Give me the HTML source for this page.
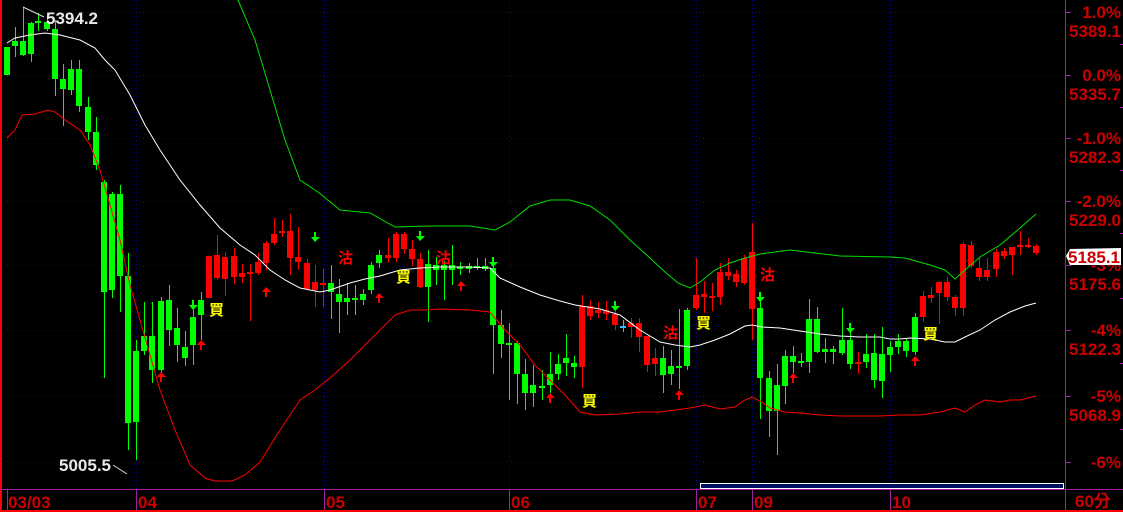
<!DOCTYPE html>
<html><head><meta charset="utf-8"><style>
html,body{margin:0;padding:0;background:#000;width:1123px;height:512px;overflow:hidden}
svg{display:block}
.ax{font:bold 17px "Liberation Sans",sans-serif;fill:#cc0000;text-anchor:end}
.dt{font:bold 17px "Liberation Sans",sans-serif;fill:#cc0000}
.mk{font:bold 15px "Noto Sans CJK TC","WenQuanYi Zen Hei",sans-serif}
.lb{font:bold 17px "Liberation Sans",sans-serif;fill:#e8e8e8}
</style></head><body>
<svg id="s" width="1123" height="512" xmlns="http://www.w3.org/2000/svg">
<g stroke="#0000d0" stroke-width="1" stroke-dasharray="1,3">
<line x1="7" y1="12.5" x2="1065" y2="12.5"/><line x1="7" y1="75.5" x2="1065" y2="75.5"/>
<line x1="7" y1="138.5" x2="1065" y2="138.5"/><line x1="7" y1="201.5" x2="1065" y2="201.5"/>
<line x1="7" y1="265.5" x2="1065" y2="265.5"/><line x1="7" y1="330.5" x2="1065" y2="330.5"/>
<line x1="7" y1="396.5" x2="1065" y2="396.5"/><line x1="7" y1="462.5" x2="1065" y2="462.5"/>
<line x1="7.5" y1="0" x2="7.5" y2="490"/><line x1="136.5" y1="0" x2="136.5" y2="490"/>
<line x1="324.5" y1="0" x2="324.5" y2="490"/><line x1="509.5" y1="0" x2="509.5" y2="490"/>
<line x1="696.5" y1="0" x2="696.5" y2="490"/><line x1="752.5" y1="0" x2="752.5" y2="490"/>
<line x1="890.5" y1="0" x2="890.5" y2="490"/>
</g>
<g id="c"></g>
<polyline fill="none" stroke="#fff" stroke-width="1" points="7,43 15,38 30,35 45,33 60,35 80,40 95,48 105,60 115,70 130,95 145,125 160,150 180,180 200,205 220,228 240,245 255,255 270,270 285,280 300,288 320,292 330,290 350,283 365,279 380,276 400,270 420,268 440,267 470,267 490,268 500,278 520,287 540,295 560,301 575,305 600,309 620,315 640,330 660,342 675,345 690,347 700,345 715,340 730,334 745,326 752,325 762,327 780,328 800,331 820,334 840,336 860,337 880,337 890,339 900,339 910,338 930,339 945,342 955,342 965,337 980,330 995,320 1010,312 1025,306 1036,303"/>
<polyline fill="none" stroke="#00e000" stroke-width="1" points="238,0 255,40 270,90 285,140 300,180 318,192 340,210 370,213 395,227 430,226 470,226 495,230 510,222 530,206 550,200 570,200 590,206 610,220 630,240 650,258 665,272 678,283 690,288 700,282 715,270 730,263 745,258 760,254 790,250 840,256 890,257 905,258 930,265 945,270 955,279 965,270 980,257 1000,245 1020,228 1036,214"/>
<polyline fill="none" stroke="#ff0000" stroke-width="1" points="7,138 15,130 22,115 35,114 48,110 55,112 65,120 80,130 90,145 100,170 110,205 120,240 130,285 140,320 150,355 160,390 175,430 190,465 205,478 215,481 232,481 245,475 260,462 280,430 300,400 315,390 330,378 350,360 365,345 380,330 395,315 410,310 425,310 440,309 470,310 490,312 505,330 520,345 535,365 550,380 565,395 580,412 595,415 620,414 640,412 660,412 690,408 705,405 720,409 735,407 745,400 752,397 762,402 770,408 785,412 800,413 820,415 840,416 880,416 900,415 920,415 940,412 955,408 965,412 975,405 985,400 1000,402 1010,400 1020,400 1036,396"/>
<g id="m"></g>
<g class="mk" fill="#ffff00">
<text x="209" y="315">買</text><text x="396" y="282">買</text><text x="582" y="406">買</text><text x="696" y="328">買</text><text x="923" y="339">買</text>
</g>
<g class="mk" fill="#ff0000">
<text x="338" y="263">沽</text><text x="436" y="263">沽</text><text x="663" y="338">沽</text><text x="760" y="280">沽</text>
</g>
<line x1="23" y1="7" x2="44" y2="17" stroke="#ddd"/>
<text class="lb" x="46" y="24">5394.2</text>
<line x1="113" y1="465" x2="127" y2="474" stroke="#ddd"/>
<text class="lb" x="59" y="471">5005.5</text>
<rect x="0" y="0" width="2" height="512" fill="#ff0000"/>
<rect x="1065" y="0" width="1" height="512" fill="#a020a0"/>
<rect x="0" y="489" width="1123" height="1" fill="#a020a0"/>
<rect x="0" y="510" width="1123" height="2" fill="#ff0000"/>
<g fill="#a020a0">
<rect x="7" y="490" width="1" height="20"/><rect x="136" y="490" width="1" height="20"/><rect x="324" y="490" width="1" height="20"/><rect x="509" y="490" width="1" height="20"/><rect x="696" y="490" width="1" height="20"/><rect x="752" y="490" width="1" height="20"/><rect x="890" y="490" width="1" height="20"/>
<rect x="1065" y="12" width="6" height="1"/><rect x="1065" y="75" width="6" height="1"/><rect x="1065" y="138" width="6" height="1"/><rect x="1065" y="201" width="6" height="1"/><rect x="1065" y="265" width="6" height="1"/><rect x="1065" y="330" width="6" height="1"/><rect x="1065" y="396" width="6" height="1"/><rect x="1065" y="462" width="6" height="1"/>
<rect x="1120" y="44" width="3" height="1"/><rect x="1120" y="107" width="3" height="1"/><rect x="1120" y="170" width="3" height="1"/><rect x="1120" y="233" width="3" height="1"/><rect x="1120" y="298" width="3" height="1"/><rect x="1120" y="363" width="3" height="1"/><rect x="1120" y="429" width="3" height="1"/>
</g>
<rect x="700.5" y="483.5" width="363" height="5" fill="#001060" stroke="#fff"/>
<g class="ax">
<text x="1121" y="18">1.0%</text><text x="1121" y="37">5389.1</text>
<text x="1121" y="81">0.0%</text><text x="1121" y="100">5335.7</text>
<text x="1121" y="144">-1.0%</text><text x="1121" y="163">5282.3</text>
<text x="1121" y="207">-2.0%</text><text x="1121" y="226">5229.0</text>
<text x="1121" y="271">-3%</text><text x="1121" y="290">5175.6</text>
<text x="1121" y="336">-4%</text><text x="1121" y="355">5122.3</text>
<text x="1121" y="402">-5%</text><text x="1121" y="421">5068.9</text>
<text x="1121" y="468">-6%</text>
</g>
<polygon points="1066,256 1070,249 1121,248 1121,265 1070,265" fill="#fff"/>
<text class="ax" x="1120" y="263">5185.1</text>
<g class="dt">
<text x="8" y="508">03/03</text><text x="138" y="508">04</text><text x="326" y="508">05</text><text x="511" y="508">06</text><text x="698" y="508">07</text><text x="754" y="508">09</text><text x="892" y="508">10</text>
</g>
<text x="1075" y="507" style="font:bold 17px 'Liberation Sans','Noto Sans CJK TC',sans-serif;fill:#cc0000">60分</text>
</svg>
<script>
var G="#00ff00",R="#ff0000";
var d=[
[7,G,47,75,47,75],[15,G,41,46,27,57],[23,G,41,55,7,56],[31,G,23,54,22,62],[38,G,21,22,13,31],[47,G,22,29,15,31],[55,G,29,79,20,96],[63,G,79,89,64,126],[71,G,69,90,60,95],[79,G,69,106,60,112],[88,G,107,132,97,140],[96,G,132,165,117,170],
[104,G,182,292,180,378],[112,G,194,290,192,298],[120,G,194,276,185,312],[128,G,276,423,253,450],[136,G,351,422,340,460],[144,G,336,351,302,355],[152,G,336,370,302,383],[161,G,301,370,297,373],[169,G,300,330,285,346],[177,G,328,345,308,362],[185,G,347,358,331,366],[193,G,317,345,300,365],[201,G,300,315,292,340],
[209,R,256,298,256,298],[217,R,255,278,235,280],[225,R,257,279,252,296],[234,R,256,277,248,284],[242,R,273,277,264,283],[250,R,272,274,264,321],[258,R,262,273,253,275],[266,R,243,263,241,270],[274,R,234,243,218,245],[282,R,231,233,220,237],[290,R,231,258,214,275],[298,R,257,262,227,270],[307,R,263,289,259,290],[315,R,282,290,265,307],[323,R,283,285,269,307],
[331,G,283,292,265,319],[339,G,294,302,279,333],[347,G,298,302,283,315],[355,G,298,299,285,315],[363,G,294,300,289,305],[371,G,265,290,262,294],[379,G,255,263,250,268],
[388,R,255,258,238,263],[396,R,234,258,232,262],[404,R,234,249,232,254],[412,R,249,259,240,266],[420,R,259,287,253,288],
[428,G,264,287,250,322],[436,G,265,270,257,285],[444,G,265,270,261,300],[452,G,265,270,245,285],[460,G,267,269,262,275],[469,G,266,269,263,273],[477,G,266,268,258,270],[485,G,266,269,258,271],
[493,G,268,325,257,374],[501,G,325,344,310,358],[509,G,343,345,323,400],[517,G,343,374,341,404],[525,G,374,393,359,410],[533,G,385,393,365,407],[542,G,386,388,370,400],[550,G,374,385,352,393],[558,G,364,374,354,380],[566,G,358,363,334,376],[574,G,363,367,356,378],
[582,R,306,367,295,388],[590,R,306,316,300,320],[598,R,310,313,302,318],[606,R,310,314,301,320],[615,R,314,325,305,330],[623,"#30c0ff",326,327,320,332],[631,R,323,327,318,338],[639,R,323,337,318,352],[647,R,336,365,336,372],[655,R,358,364,348,376],
[663,G,358,375,346,393],[671,G,366,374,350,385],[679,G,366,367,309,389],[687,G,310,366,308,370],
[696,R,295,308,258,310],[704,R,294,297,281,313],[712,R,296,297,283,311],[720,R,272,297,263,305],[728,R,272,276,258,280],[736,R,274,282,270,287],[744,R,258,283,255,285],[752,R,252,309,223,340],
[760,G,308,378,293,419],[769,G,378,411,371,437],[777,G,385,411,364,455],[785,G,356,386,350,404],[793,G,356,362,346,373],[801,G,361,363,353,367],[809,G,319,362,299,373],[817,G,319,352,307,353],[825,G,349,352,338,363],[833,G,349,352,346,364],[842,G,340,353,308,355],[850,G,340,364,324,369],[858,R,362,364,352,374],[866,G,354,362,334,368],[874,G,353,380,334,388],[882,G,354,381,327,398],[890,G,347,355,341,372],[898,G,341,347,334,354],[906,G,341,351,338,357],[915,G,317,352,313,355],
[923,R,296,317,291,322],[931,R,295,298,287,303],[939,R,282,293,281,324],[947,R,282,297,277,301],[955,R,297,308,295,316],[963,R,244,308,242,316],[971,R,245,266,241,268],[979,R,268,277,258,281],[987,R,270,277,258,281],[996,R,252,269,249,277],[1004,R,251,256,248,259],[1012,R,247,255,247,275],[1020,R,245,246,231,255],[1028,R,245,246,238,248],[1036,R,246,253,244,255]];
var h="";
d.forEach(function(a){var x=a[0],c=a[1];h+='<rect x="'+x+'" y="'+a[4]+'" width="1" height="'+(a[5]-a[4])+'" fill="'+c+'"/>';h+='<rect x="'+(x-3)+'" y="'+a[2]+'" width="6" height="'+Math.max(2,a[3]-a[2])+'" fill="'+c+'"/>';});
document.getElementById("c").innerHTML=h;
var up=[[161,377],[201,345],[266,292],[379,298],[461,286],[550,398],[679,395],[793,378],[915,361]],dn=[[193,305],[315,237],[420,236],[493,262],[615,306],[760,297],[850,328]];
var m="";
up.forEach(function(p){var x=p[0],y=p[1];m+='<polygon points="'+(x-4)+','+y+' '+x+','+(y-5)+' '+(x+5)+','+y+' '+(x+1)+','+y+' '+(x+1)+','+(y+5)+' '+(x-1)+','+(y+5)+' '+(x-1)+','+y+'" fill="#ff0000"/>';});
dn.forEach(function(p){var x=p[0],y=p[1];m+='<polygon points="'+(x-4)+','+y+' '+x+','+(y+5)+' '+(x+5)+','+y+' '+(x+1)+','+y+' '+(x+1)+','+(y-5)+' '+(x-1)+','+(y-5)+' '+(x-1)+','+y+'" fill="#00ff00"/>';});
document.getElementById("m").innerHTML=m;
</script>
</body></html>
